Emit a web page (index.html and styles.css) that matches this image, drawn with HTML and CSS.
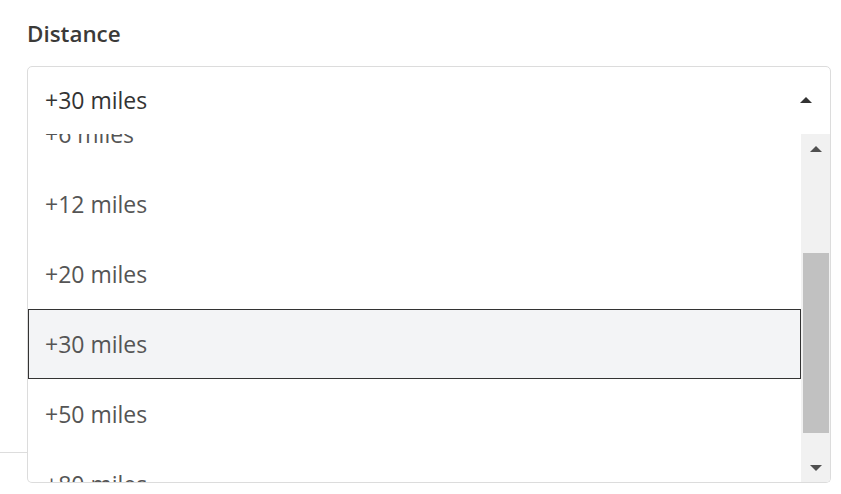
FILE: index.html
```html
<!DOCTYPE html>
<html lang="en">
<head>
<meta charset="utf-8">
<title>Distance</title>
<link rel="stylesheet" href="styles.css">
</head>
<body>
<div class="page">
  <div class="field">
    <div class="label">Distance</div>
    <div class="select-wrap">
      <div class="select">
        <span class="value">+30 miles</span>
        <span class="caret-up"></span>
      </div>
      <div class="dropdown">
        <div class="list">
          <div class="options">
            <div class="option">+6 miles</div>
            <div class="option">+12 miles</div>
            <div class="option">+20 miles</div>
            <div class="option selected">+30 miles</div>
            <div class="option">+50 miles</div>
            <div class="option">+80 miles</div>
          </div>
        </div>
        <div class="scrollbar">
          <div class="sb-btn"><span class="sb-up"></span></div>
          <div class="sb-track"><div class="sb-thumb"></div></div>
          <div class="sb-btn"><span class="sb-down"></span></div>
        </div>
      </div>
    </div>
  </div>
  <div class="divider"></div>
</div>
</body>
</html>
```

FILE: styles.css
```css
html, body {
  margin: 0;
  padding: 0;
  background: #ffffff;
}
body {
  font-family: "Open Sans", "DejaVu Sans", sans-serif;
  color: #333333;
  width: 841px;
  height: 494px;
  overflow: hidden;
}
.page {
  padding: 19px 11px 0 27px;
}
.field {
  display: flex;
  flex-direction: column;
}
.label {
  font-size: 22.4px;
  font-weight: 600;
  line-height: 30px;
  color: #3b3a38;
  margin-bottom: 17px;
}
.select-wrap {
  position: relative;
  width: 804px;
}
.select {
  box-sizing: border-box;
  height: 69px;
  border: 1px solid #dcdcdc;
  border-radius: 5px 5px 0 0;
  display: flex;
  align-items: center;
  justify-content: space-between;
  padding: 0 17px 2px 17px;
  background: #fff;
}
.value {
  font-size: 23px;
  color: #333333;
}
.caret-up {
  width: 0;
  height: 0;
  border-left: 6px solid transparent;
  border-right: 6px solid transparent;
  border-bottom: 6px solid #333333;
  margin-right: 1px;
}
.dropdown {
  position: absolute;
  top: 68px;
  left: 0;
  right: 0;
  box-sizing: border-box;
  height: 349px;
  border: 1px solid #dcdcdc;
  border-top: none;
  border-radius: 0 0 5px 5px;
  background: #fff;
  display: flex;
  overflow: hidden;
  z-index: 2;
}
.list {
  flex: 1;
  overflow: hidden;
}
.options {
  margin-top: -35px;
}
.option {
  box-sizing: border-box;
  height: 70px;
  display: flex;
  align-items: center;
  padding-left: 17px;
  font-size: 23px;
  color: #555555;
}
.option.selected {
  border: 1px solid #333333;
  background: #f3f4f6;
  padding-left: 16px;
}
.scrollbar {
  width: 29px;
  background: #f1f1f1;
  display: flex;
  flex-direction: column;
}
.sb-btn {
  height: 29px;
  display: flex;
  align-items: center;
  justify-content: center;
}
.sb-up {
  width: 0;
  height: 0;
  border-left: 6px solid transparent;
  border-right: 6px solid transparent;
  border-bottom: 6px solid #505050;
}
.sb-down {
  width: 0;
  height: 0;
  border-left: 6px solid transparent;
  border-right: 6px solid transparent;
  border-top: 6px solid #505050;
}
.sb-track {
  flex: 1;
  padding: 0 1px 0 2px;
}
.sb-thumb {
  margin-top: 90px;
  height: 180px;
  background: #c1c1c1;
}
.divider {
  margin-left: -27px;
  margin-top: 317px;
  height: 1px;
  background: #dddddd;
}
```
